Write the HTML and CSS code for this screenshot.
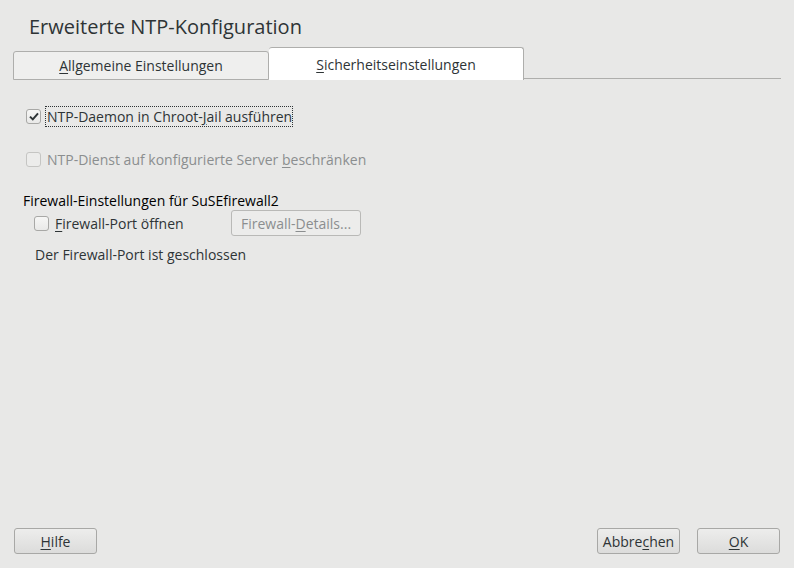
FILE: index.html
```html
<!DOCTYPE html>
<html>
<head>
<meta charset="utf-8">
<link rel="stylesheet" href="styles.css">
</head>
<body>
<div class="dialog">
  <h1 class="title">Erweiterte NTP-Konfiguration</h1>
  <div class="tabbar">
    <div class="tab"><span class="u">A</span>llgemeine Einstellungen</div>
    <div class="tab active"><span class="u">S</span>icherheitseinstellungen</div>
    <div class="tabfill"></div>
  </div>
  <div class="content">
    <div class="row row1">
      <span class="cb checked"><svg width="10" height="9" viewBox="0 0 10 9"><path d="M1 4.6 L3.8 7.4 L9 1.4" fill="none" stroke="#2e3436" stroke-width="2"/></svg></span>
      <span class="focus">NTP-Daemon in Chroot-<span class="u">J</span>ail ausführen</span>
    </div>
    <div class="row row2 disabled">
      <span class="cb"></span>
      <span class="lbl">NTP-Dienst auf konfigurierte Server <span class="u">b</span>eschränken</span>
    </div>
    <div class="group">
      <div class="group-title">Firewall-Einstellungen für SuSEfirewall2</div>
      <div class="fwrow">
        <span class="cb"></span>
        <span class="lbl fwlbl"><span class="u">F</span>irewall-Port öffnen</span>
        <button class="btn small" disabled>Firewall-<span class="u">D</span>etails...</button>
      </div>
      <div class="status">Der Firewall-Port ist geschlossen</div>
    </div>
  </div>
  <div class="footer">
    <button class="btn"><span class="u">H</span>ilfe</button>
    <div class="spacer"></div>
    <button class="btn">Abbre<span class="u">c</span>hen</button>
    <button class="btn"><span class="u">O</span>K</button>
  </div>
</div>
</body>
</html>
```
FILE: styles.css
```css
html, body {
  margin: 0;
  padding: 0;
  background: #e8e8e7;
}
body {
  font-family: "Open Sans", "Noto Sans", sans-serif;
  font-size: 14px;
  color: #2e3436;
}
.dialog {
  width: 794px;
  height: 568px;
  display: flex;
  flex-direction: column;
  box-sizing: border-box;
}
.u {
  text-decoration: underline;
  text-underline-offset: 2px;
}
.title {
  margin: 0;
  padding: 13px 0 0 29px;
  height: 47px;
  box-sizing: border-box;
  font-weight: normal;
  font-size: 20px;
  line-height: 28px;
  color: #2e3436;
}
.tabbar {
  display: flex;
  align-items: flex-end;
  margin: 0 13px;
  height: 33px;
}
.tab {
  width: 256px;
  height: 29px;
  box-sizing: border-box;
  border: 1px solid #aeaeac;
  border-radius: 3px 3px 0 0;
  background: #efefee;
  text-align: center;
  line-height: 28px;
  font-size: 14px;
}
.tab.active {
  width: 255px;
  height: 33px;
  border-left: none;
  border-bottom: none;
  background: #ffffff;
  line-height: 33px;
}
.tabfill {
  flex: 1;
  height: 1px;
  background: #aeaeac;
  margin-bottom: 1px;
}
.content {
  padding: 25px 0 0 0;
}
.row {
  display: flex;
  align-items: center;
  height: 22px;
}
.row1 {
  padding-left: 26px;
}
.row2 {
  padding-left: 26px;
  margin-top: 21px;
}
.cb {
  width: 15px;
  height: 15px;
  box-sizing: border-box;
  border: 1px solid #a8a8a6;
  border-radius: 3px;
  background: linear-gradient(#f6f6f5, #e9e9e8);
  display: inline-flex;
  align-items: center;
  justify-content: center;
  flex: none;
}
.focus {
  margin-left: 4px;
  padding: 0 0 0 1px;
  border: 1px dotted #2e3436;
  line-height: 19px;
}
.lbl {
  margin-left: 6px;
}
.disabled {
  color: #8b8e8f;
}
.disabled .cb {
  border-color: #c5c5c3;
  background: #ececeb;
}
.group {
  padding: 21px 0 0 23px;
}
.group-title {
  color: #000;
  line-height: 20px;
}
.fwrow {
  display: flex;
  align-items: center;
  padding-left: 11px;
  height: 26px;
  margin-top: -1px;
}
.fwlbl {
  width: 176px;
}
.btn {
  font-family: inherit;
  font-size: 14px;
  color: #2e3436;
  height: 26px;
  width: 83px;
  box-sizing: border-box;
  border: 1px solid #a8a8a6;
  border-radius: 3px;
  background: linear-gradient(#ededec, #dcdcdb);
  padding: 0;
}
.btn.small {
  width: 130px;
  height: 26px;
  background: #ececeb;
  border-color: #b9b9b7;
  color: #8b8e8f;
}
.status {
  margin: 9px 0 0 12px;
  line-height: 20px;
}
.footer {
  margin-top: auto;
  display: flex;
  padding: 0 14px 14px 14px;
  gap: 17px;
}
.spacer {
  flex: 1;
}
```
